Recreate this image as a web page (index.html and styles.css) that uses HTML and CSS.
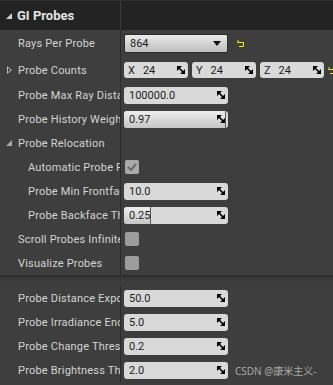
FILE: index.html
```html
<!DOCTYPE html>
<html>
<head>
    <link rel="stylesheet" href="styles.css">
</head>
<body>
    <div class="panel">
        <div class="header">
            <div class="title"><span class="tri-open light"></span>GI Probes</div>
            <div></div>
        </div>

        <div class="group">
            <div class="row tall">
                <div class="label">Rays Per Probe</div>
                <div class="value">
                    <div class="combo">864<span class="combo-arrow"></span></div>
                    <svg class="reset" width="8" height="7" viewBox="0 0 8 7"><path d="M1 0V3M0.5 2.5H6.5V6.5H2" fill="none" stroke="#f2f200" stroke-width="1"/></svg>
                </div>
            </div>
            <div class="row mid">
                <div class="label caret"><span class="tri-closed"></span>Probe Counts</div>
                <div class="value vec">
                    <div class="field short"><span class="axis">X</span>24<svg class="spin" width="8" height="8" viewBox="0 0 8 8"><path d="M0 0H5L0 5Z M8 8H3L8 3Z" fill="#000"/><path d="M1 1L7 7" stroke="#000" stroke-width="1.6"/></svg></div>
                    <div class="field short"><span class="axis">Y</span>24<svg class="spin" width="8" height="8" viewBox="0 0 8 8"><path d="M0 0H5L0 5Z M8 8H3L8 3Z" fill="#000"/><path d="M1 1L7 7" stroke="#000" stroke-width="1.6"/></svg></div>
                    <div class="field short"><span class="axis">Z</span>24<svg class="spin" width="8" height="8" viewBox="0 0 8 8"><path d="M0 0H5L0 5Z M8 8H3L8 3Z" fill="#000"/><path d="M1 1L7 7" stroke="#000" stroke-width="1.6"/></svg></div>
                    <svg class="reset" width="8" height="7" viewBox="0 0 8 7"><path d="M1 0V3M0.5 2.5H6.5V6.5H2" fill="none" stroke="#f2f200" stroke-width="1"/></svg>
                </div>
            </div>
            <div class="row">
                <div class="label">Probe Max Ray Distance</div>
                <div class="value"><div class="field">100000.0<svg class="spin" width="8" height="8" viewBox="0 0 8 8"><path d="M0 0H5L0 5Z M8 8H3L8 3Z" fill="#000"/><path d="M1 1L7 7" stroke="#000" stroke-width="1.6"/></svg></div></div>
            </div>
            <div class="row">
                <div class="label">Probe History Weight</div>
                <div class="value"><div class="field"><span class="fill" style="width:97%"></span><span class="num">0.97</span><svg class="spin" width="8" height="8" viewBox="0 0 8 8"><path d="M0 0H5L0 5Z M8 8H3L8 3Z" fill="#000"/><path d="M1 1L7 7" stroke="#000" stroke-width="1.6"/></svg></div></div>
            </div>
            <div class="row">
                <div class="label caret"><span class="tri-open"></span>Probe Relocation</div>
                <div class="value"></div>
            </div>
            <div class="row">
                <div class="label sub">Automatic Probe Relocation</div>
                <div class="value"><span class="check on"><svg width="10" height="8" viewBox="0 0 10 8"><path d="M1 4L4 7L9 1" fill="none" stroke="#6a6a6a" stroke-width="2"/></svg></span></div>
            </div>
            <div class="row">
                <div class="label sub">Probe Min Frontface Distance</div>
                <div class="value"><div class="field">10.0<svg class="spin" width="8" height="8" viewBox="0 0 8 8"><path d="M0 0H5L0 5Z M8 8H3L8 3Z" fill="#000"/><path d="M1 1L7 7" stroke="#000" stroke-width="1.6"/></svg></div></div>
            </div>
            <div class="row">
                <div class="label sub">Probe Backface Threshold</div>
                <div class="value"><div class="field"><span class="fill" style="width:25%"></span><span class="num">0.25</span><svg class="spin" width="8" height="8" viewBox="0 0 8 8"><path d="M0 0H5L0 5Z M8 8H3L8 3Z" fill="#000"/><path d="M1 1L7 7" stroke="#000" stroke-width="1.6"/></svg></div></div>
            </div>
            <div class="row">
                <div class="label">Scroll Probes Infinite Volume</div>
                <div class="value"><span class="check"></span></div>
            </div>
            <div class="row">
                <div class="label">Visualize Probes</div>
                <div class="value"><span class="check"></span></div>
            </div>
        </div>

        <div class="sep"></div>

        <div class="group">
            <div class="row">
                <div class="label">Probe Distance Exponent</div>
                <div class="value"><div class="field">50.0<svg class="spin" width="8" height="8" viewBox="0 0 8 8"><path d="M0 0H5L0 5Z M8 8H3L8 3Z" fill="#000"/><path d="M1 1L7 7" stroke="#000" stroke-width="1.6"/></svg></div></div>
            </div>
            <div class="row">
                <div class="label">Probe Irradiance Encoding Gamma</div>
                <div class="value"><div class="field">5.0<svg class="spin" width="8" height="8" viewBox="0 0 8 8"><path d="M0 0H5L0 5Z M8 8H3L8 3Z" fill="#000"/><path d="M1 1L7 7" stroke="#000" stroke-width="1.6"/></svg></div></div>
            </div>
            <div class="row">
                <div class="label">Probe Change Threshold</div>
                <div class="value"><div class="field">0.2<svg class="spin" width="8" height="8" viewBox="0 0 8 8"><path d="M0 0H5L0 5Z M8 8H3L8 3Z" fill="#000"/><path d="M1 1L7 7" stroke="#000" stroke-width="1.6"/></svg></div></div>
            </div>
            <div class="row">
                <div class="label">Probe Brightness Threshold</div>
                <div class="value">
                    <div class="field">2.0<svg class="spin" width="8" height="8" viewBox="0 0 8 8"><path d="M0 0H5L0 5Z M8 8H3L8 3Z" fill="#000"/><path d="M1 1L7 7" stroke="#000" stroke-width="1.6"/></svg></div>
                    <span class="mark">CSDN @康米主义-</span>
                </div>
            </div>
        </div>
    </div>
</body>
</html>
```

FILE: styles.css
```css
body {
    margin: 0;
    background: #3e3e3e;
    font: 11px Roboto, "Noto Sans", sans-serif;
    color: #d4d4d4;
}
.panel {
    width: 333px;
    height: 385px;
    overflow: hidden;
}
.header {
    display: grid;
    grid-template-columns: 121px 1fr;
    height: 29px;
    background: #232323;
    border-top: 1px solid #2f2f2f;
}
.header .title {
    display: flex;
    align-items: center;
    padding-left: 6px;
    border-right: 1px solid #3a3a3a;
    font-weight: bold;
    font-size: 13px;
    color: #e4e4e4;
}
.row {
    display: grid;
    grid-template-columns: 121px 1fr;
    height: 24px;
}
.row.tall {
    height: 27px;
}
.row.mid {
    height: 26px;
}
.label {
    display: flex;
    align-items: center;
    padding-left: 18px;
    border-right: 1px solid #2a2a2a;
    white-space: nowrap;
    overflow: hidden;
    letter-spacing: 0.2px;
}
.label.caret {
    padding-left: 6px;
}
.label.sub {
    padding-left: 28px;
}
.value {
    display: flex;
    align-items: center;
    padding-left: 3px;
}
.tri-open {
    width: 0;
    height: 0;
    border-left: 6px solid transparent;
    border-bottom: 6px solid #a8a8a8;
    margin-right: 6px;
}
.tri-open.light {
    border-bottom-color: #d0d0d0;
    margin-right: 5px;
}
.tri-closed {
    width: 5px;
    height: 8px;
    margin: 0 6px 0 1px;
    background: #bcbcbc;
    clip-path: polygon(0 0, 100% 50%, 0 100%, 0 0, 1px 1.8px, 1px 6.2px, 3.6px 4px, 1px 1.8px);
}
.combo {
    width: 104px;
    height: 19px;
    box-sizing: border-box;
    display: flex;
    align-items: center;
    padding: 0 6px 0 5px;
    background: linear-gradient(#ebebeb, #bdbdbd);
    border: 1px solid #2b2b2b;
    border-radius: 2px;
    color: #1e1e1e;
}
.combo-arrow {
    margin-left: auto;
    width: 0;
    height: 0;
    border-left: 4px solid transparent;
    border-right: 4px solid transparent;
    border-top: 5px solid #111;
}
.reset {
    margin-left: 9px;
}
.vec {
    gap: 4px;
}
.vec .reset {
    margin-left: 0;
}
.field {
    position: relative;
    width: 104px;
    height: 17px;
    box-sizing: border-box;
    display: flex;
    align-items: center;
    padding: 0 3px 0 5px;
    background: #d9d9d9;
    border-radius: 3px;
    color: #1c1c1c;
    overflow: hidden;
}
.field.short {
    width: 64px;
    height: 16px;
    padding-left: 4px;
}
.axis {
    margin-right: 8px;
}
.fill {
    position: absolute;
    left: 0;
    top: 0;
    bottom: 0;
    background: linear-gradient(#eeeeee, #c6c6c6);
    border-right: 1px solid #5a5a5a;
}
.num {
    position: relative;
}
.spin {
    position: relative;
    margin-left: auto;
}
.check {
    width: 14px;
    height: 14px;
    margin-left: 1px;
    display: flex;
    align-items: center;
    justify-content: center;
    background: #9c9c9c;
    border-radius: 2px;
}
.check.on {
    background: #a9a9a9;
}
.sep {
    height: 11px;
    box-sizing: border-box;
    border-top: 2px solid #2e2e2e;
    background: linear-gradient(#363636, #3e3e3e 6px);
}
.mark {
    margin-left: 7px;
    font-size: 10px;
    color: #a9a9a9;
    white-space: nowrap;
    font-family: "Noto Sans", "Noto Sans CJK SC", sans-serif;
}
```
